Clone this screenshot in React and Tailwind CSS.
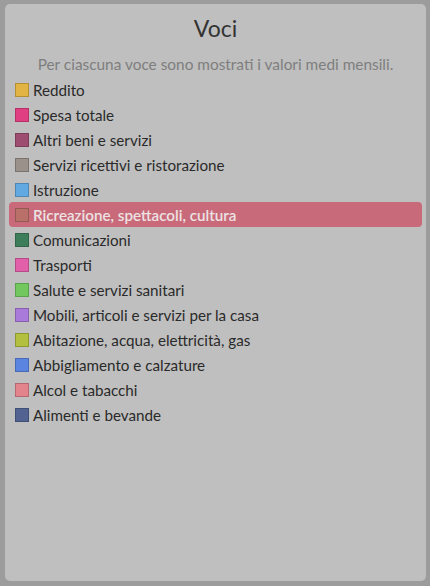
import React from "react";

const items = [
  ["Reddito", "#e2b443"],
  ["Spesa totale", "#e03f82"],
  ["Altri beni e servizi", "#9c4d70"],
  ["Servizi ricettivi e ristorazione", "#9a928a"],
  ["Istruzione", "#62a9e2"],
  ["Ricreazione, spettacoli, cultura", "#b87068", true],
  ["Comunicazioni", "#3e7d5a"],
  ["Trasporti", "#e25fa9"],
  ["Salute e servizi sanitari", "#72c85e"],
  ["Mobili, articoli e servizi per la casa", "#a97ad9"],
  ["Abitazione, acqua, elettricità, gas", "#b2bf3f"],
  ["Abbigliamento e calzature", "#5a84e0"],
  ["Alcol e tabacchi", "#e3838b"],
  ["Alimenti e bevande", "#526391"],
];

export default function App() {
  return (
    <div
      className="w-[430px] h-[586px] bg-[#9c9c9c] pt-[4px] pl-[5px] pr-[4px] pb-[5px]"
      style={{ fontFamily: 'Lato, "Liberation Sans", sans-serif' }}
    >
      <div className="h-full rounded-[5px] bg-[#bfbfbf] px-[4px] pt-[11px]">
        <div className="text-center text-[23px] leading-[26px] text-[#333]">Voci</div>
        <div className="mt-[14px] text-center text-[15.4px] leading-[18px] text-[#7e7e7e]">
          Per ciascuna voce sono mostrati i valori medi mensili.
        </div>
        <div className="mt-[4px] flex flex-col">
          {items.map(([label, color, active]) => (
            <div
              key={label}
              className={
                "flex h-[25px] items-center gap-[4px] rounded-[4px] px-[6px] text-[15.2px] " +
                (active ? "bg-[#c96a7a] font-semibold text-[#ece2e2]" : "text-[#2a2a2a]")
              }
            >
              <span
                className="h-[14px] w-[14px] shrink-0 border border-black/20"
                style={{ backgroundColor: color }}
              />
              <span className="leading-[18px]">{label}</span>
            </div>
          ))}
        </div>
      </div>
    </div>
  );
}
